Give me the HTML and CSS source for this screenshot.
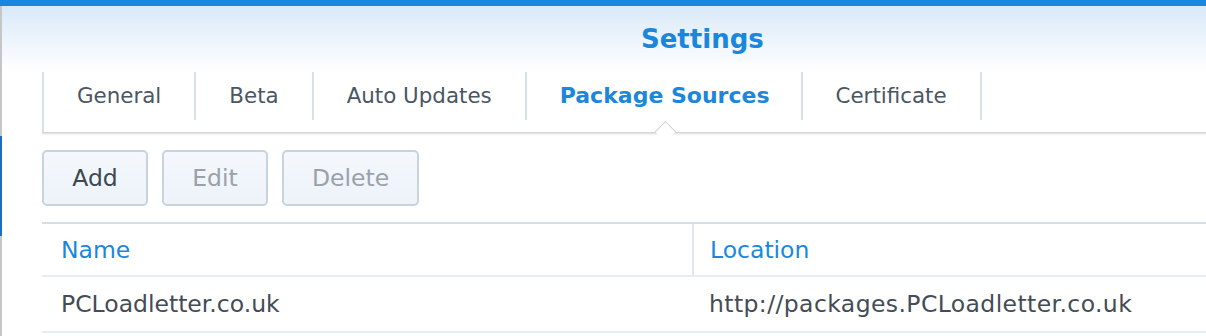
FILE: index.html
```html
<!DOCTYPE html>
<html lang="en">

<head>
    <meta charset="UTF-8">
    <title>Settings</title>
    <link rel="stylesheet" href="styles.css">
</head>

<body>
<div class="topbar"></div>
<div class="window">
    <!-- edge of the window behind -->
    <div class="edge">
        <div class="edge-grey"></div>
        <div class="edge-blue"></div>
        <div class="edge-grey edge-rest"></div>
    </div>

    <div class="main">
        <div class="header">
            <h1 class="title">Settings</h1>
        </div>

        <div class="content">
            <ul class="tabs">
                <li class="tab">General</li>
                <li class="tab">Beta</li>
                <li class="tab">Auto Updates</li>
                <li class="tab active">Package Sources</li>
                <li class="tab">Certificate</li>
            </ul>
            <div class="tabs-shadow"></div>

            <div class="toolbar">
                <button class="btn">Add</button>
                <button class="btn" disabled>Edit</button>
                <button class="btn" disabled>Delete</button>
            </div>

            <table class="grid">
                <thead>
                    <tr>
                        <th class="col-name">Name</th>
                        <th>Location</th>
                    </tr>
                </thead>
                <tbody>
                    <tr>
                        <td>PCLoadletter.co.uk</td>
                        <td class="col-url">http://packages.PCLoadletter.co.uk</td>
                    </tr>
                </tbody>
            </table>
        </div>
    </div>
</div>
</body>

</html>
```

FILE: styles.css
```css
* {
    box-sizing: border-box;
    margin: 0;
    padding: 0;
}

body {
    font-family: "DejaVu Sans", Verdana, sans-serif;
    background-color: #fff;
    width: 1206px;
    height: 336px;
    overflow: hidden;
}

.topbar {
    height: 6px;
    background-color: #1a87dd;
}

.window {
    display: flex;
    height: 330px;
}

/* left edge strip */
.edge {
    width: 2px;
    display: flex;
    flex-direction: column;
}

.edge-grey {
    height: 130px;
    background-color: #c4c6c8;
}

.edge-blue {
    height: 100px;
    background-color: #1c6fbf;
}

.edge-rest {
    flex: 1;
}

.main {
    flex: 1;
    min-width: 0;
}

.header {
    height: 66px;
    background: linear-gradient(#d9e9f8, #ffffff);
    padding-left: 639px;
    padding-top: 18px;
}

.title {
    color: #1a87dd;
    font-size: 26px;
    font-weight: bold;
    line-height: 30px;
}

.content {
    padding-left: 40px;
}

.tabs {
    list-style: none;
    display: flex;
    height: 60px;
    border-left: 2px solid #d6e0ea;
    position: relative;
}

.tab {
    height: 48px;
    line-height: 48px;
    padding: 0 33px 0 33px;
    border-right: 2px solid #d6e0ea;
    font-size: 21.4px;
    color: #4b5663;
}

.tab.active {
    color: #1a87dd;
    font-size: 22px;
    font-weight: bold;
    position: relative;
    height: 60px;
    border-right: none;
}

.tab.active::before {
    content: "";
    position: absolute;
    right: 0;
    top: 0;
    height: 48px;
    border-right: 2px solid #d6e0ea;
}

/* little arrow under the active tab */
.tab.active::after {
    content: "";
    position: absolute;
    left: 50%;
    bottom: -7px;
    width: 14px;
    height: 14px;
    margin-left: -7px;
    background-color: #fff;
    border-top: 1px solid #cfcfcf;
    border-left: 1px solid #cfcfcf;
    transform: rotate(45deg);
    z-index: 2;
}

.tabs-shadow {
    height: 4px;
    background: linear-gradient(#cdcdcd, #f4f4f4 60%, #fff);
}

.toolbar {
    display: flex;
    gap: 14px;
    padding-top: 14px;
    padding-bottom: 16px;
    border-bottom: 2px solid #d6dfe8;
}

.btn {
    height: 56px;
    min-width: 106px;
    padding: 0 28px;
    font-family: inherit;
    font-size: 23.5px;
    color: #3e4853;
    background: linear-gradient(#f4f8fd, #edf3f9);
    border: 2px solid #c9d3de;
    border-radius: 5px;
}

.btn:disabled {
    color: #9ba1a9;
}

.grid {
    width: 100%;
    border-collapse: collapse;
    font-size: 23.5px;
}

.grid th,
.grid td {
    text-align: left;
    font-weight: normal;
    padding: 0 0 0 16px;
}

.grid th {
    height: 52px;
    color: #1a87dd;
    border-left: 2px solid #e0e7ee;
    border-bottom: 2px solid #e7ecf1;
}

.grid th.col-name {
    width: 651px;
    padding-left: 19px;
    border-left: none;
}

.grid td {
    height: 56px;
    color: #444c55;
    border-bottom: 2px solid #e7ecf1;
}

.grid td:first-child {
    padding-left: 19px;
}

.grid td.col-url {
    letter-spacing: 0.4px;
}
```
